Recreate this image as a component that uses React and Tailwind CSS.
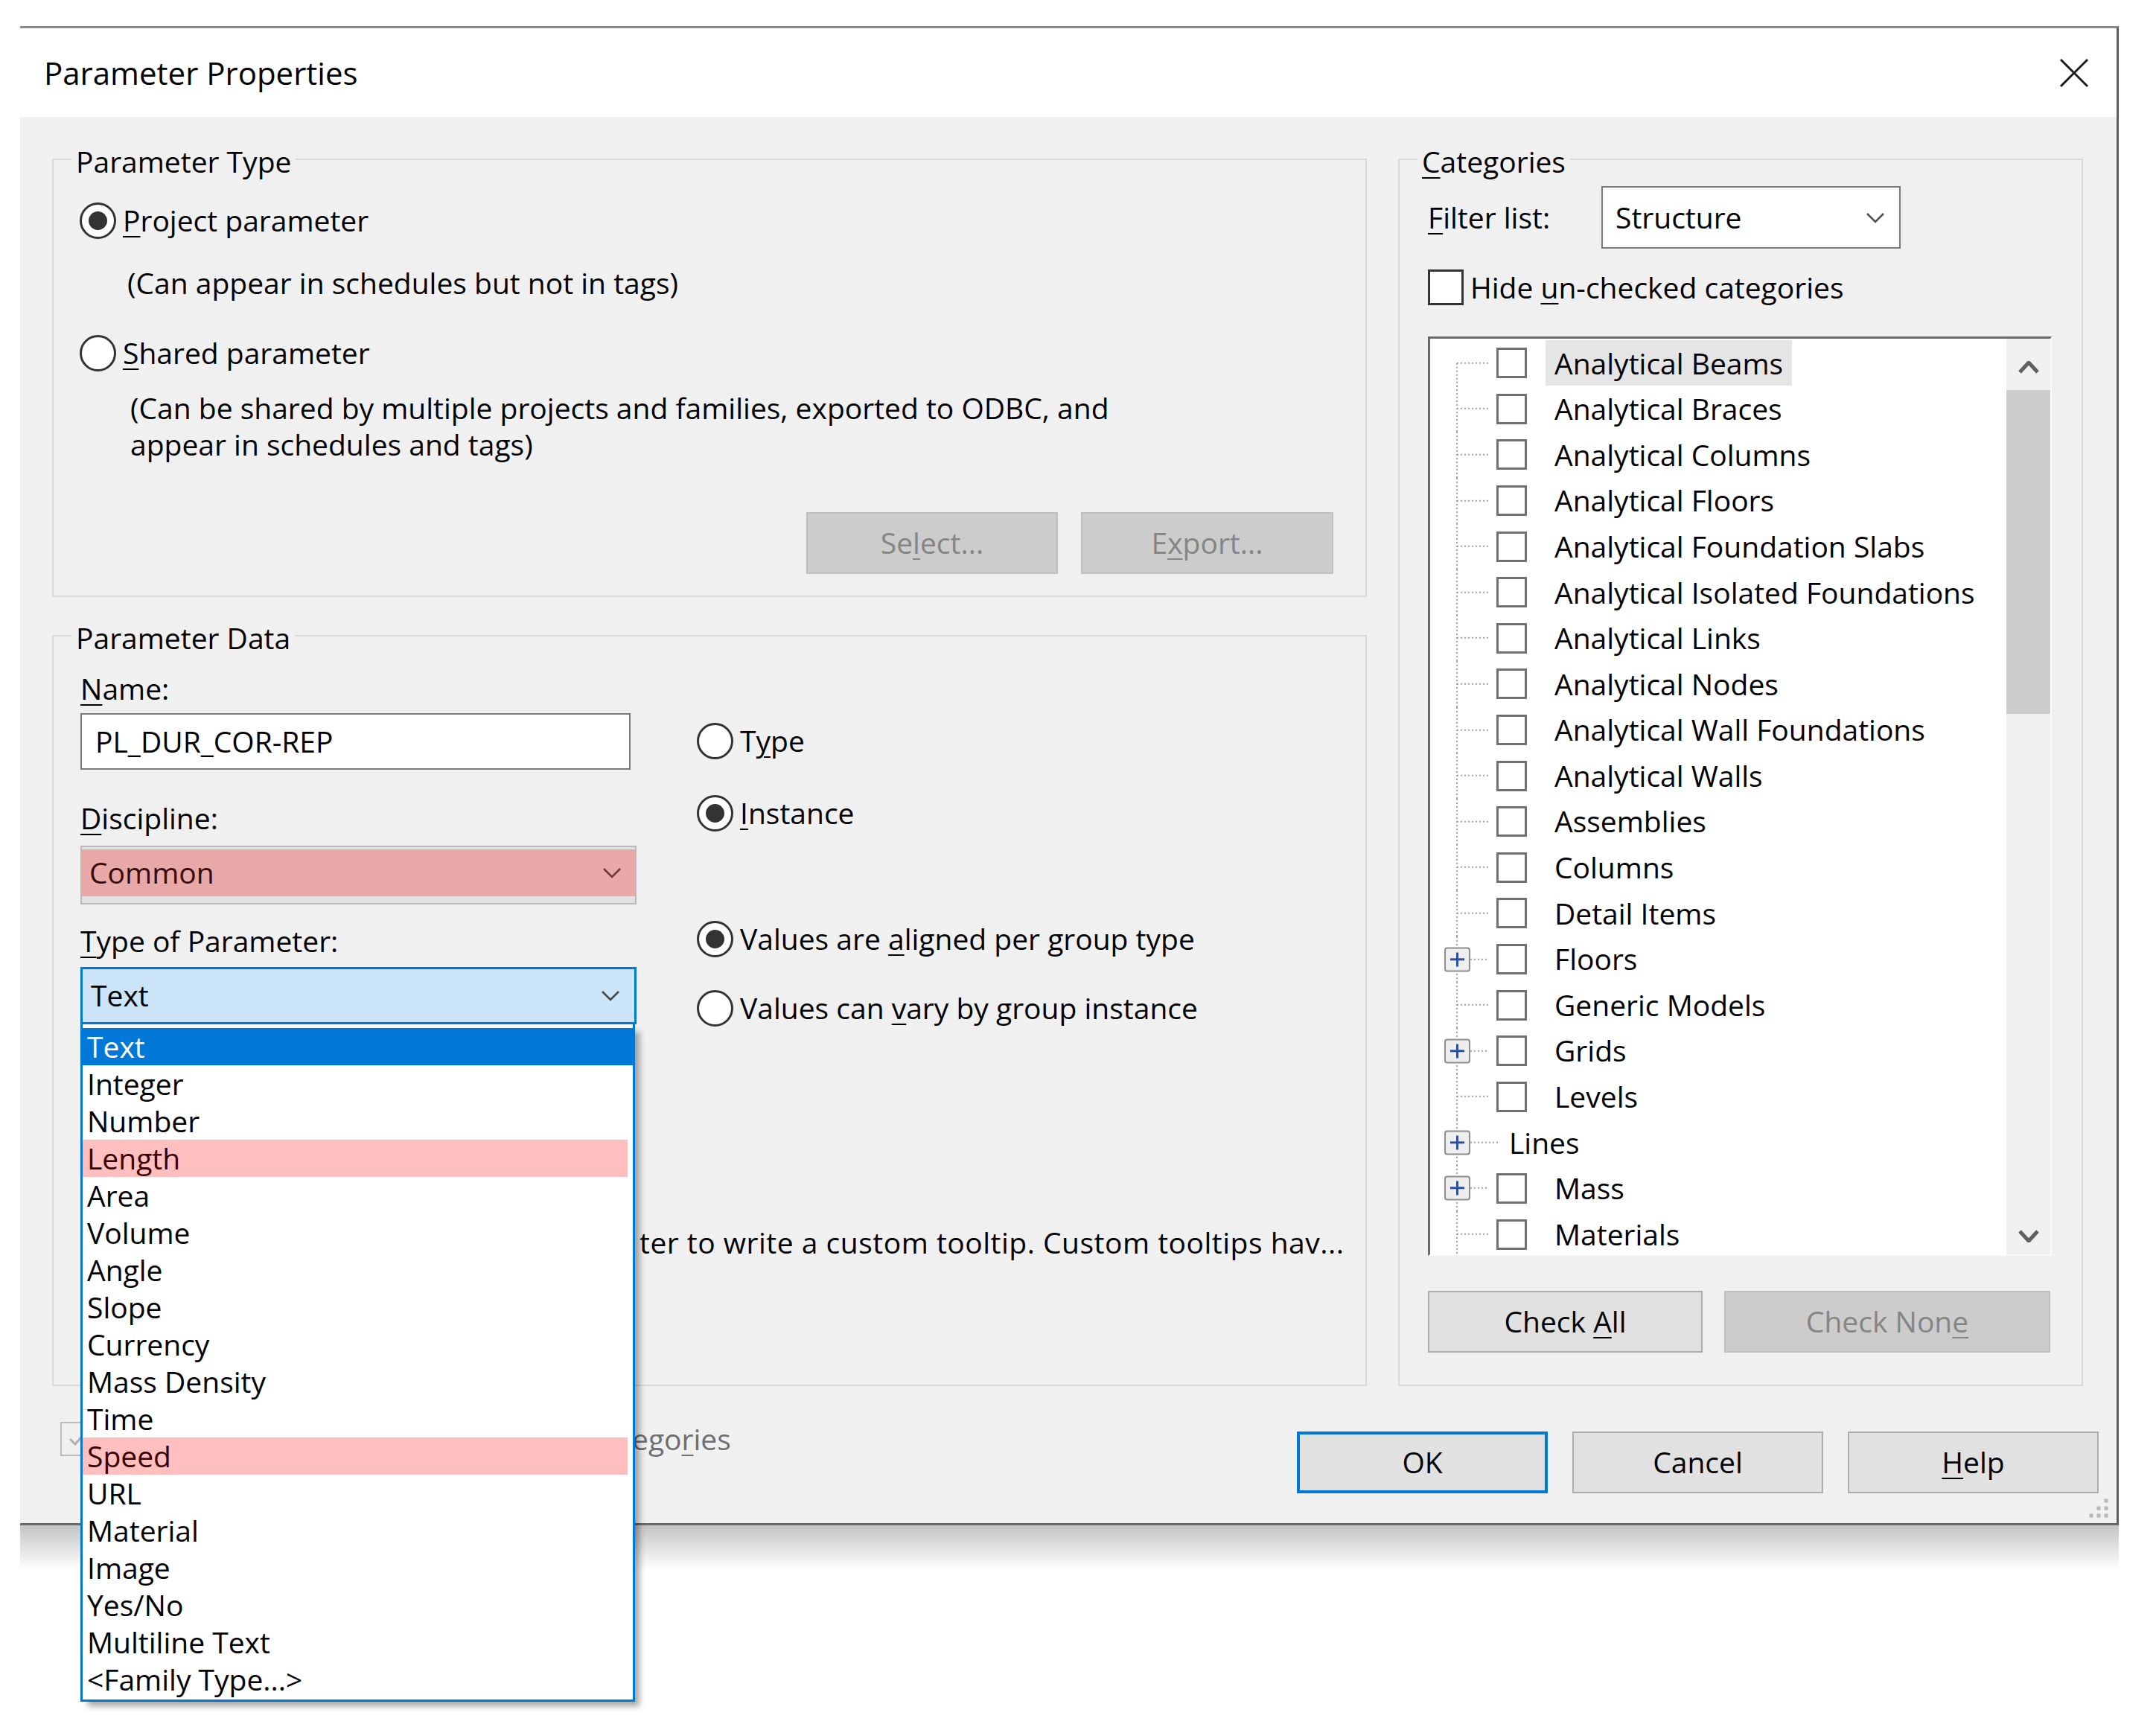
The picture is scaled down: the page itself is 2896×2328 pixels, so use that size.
import React from "react";

const U = ({ children }) => (
  <span className="underline decoration-[2px] underline-offset-[6px]">{children}</span>
);

function Chevron({ color = "#505050", down = true, w = 26, h = 15, sw = 2.5 }) {
  return (
    <svg width={w} height={h} viewBox={`0 0 ${w} ${h}`} className="shrink-0">
      {down ? (
        <polyline points={`2,2 ${w / 2},${h - 2} ${w - 2},2`} fill="none" stroke={color} strokeWidth={sw} />
      ) : (
        <polyline points={`2,${h - 2} ${w / 2},2 ${w - 2},${h - 2}`} fill="none" stroke={color} strokeWidth={sw} />
      )}
    </svg>
  );
}

function Radio({ checked }) {
  return (
    <div className="w-[49px] h-[49px] rounded-full border-[3px] border-[#333333] bg-white flex items-center justify-center shrink-0">
      {checked && <div className="w-[25px] h-[25px] rounded-full bg-[#333333]" />}
    </div>
  );
}

function RadioRow({ checked, children, className = "" }) {
  return (
    <div className={"flex items-center gap-[9px] h-[50px] " + className}>
      <Radio checked={checked} />
      <span className="leading-[50px] whitespace-nowrap">{children}</span>
    </div>
  );
}

function Group({ title, className = "", children }) {
  return (
    <div className={"relative border-2 border-[#d9d9d9] " + className}>
      <div className="absolute left-[24px] top-[-23px] px-[6px] bg-[#f0f0f0] h-[50px] leading-[50px] whitespace-nowrap">
        {title}
      </div>
      {children}
    </div>
  );
}

function DisabledButton({ className = "", children }) {
  return (
    <div className={"h-[83px] bg-[#cccccc] border-2 border-[#bfbfbf] flex items-center justify-center text-[#858585] " + className}>
      <span className="whitespace-pre">{children}</span>
    </div>
  );
}

function Button({ className = "", children }) {
  return (
    <div className={"h-[83px] bg-[#e1e1e1] border-2 border-[#adadad] flex items-center justify-center " + className}>
      <span className="whitespace-pre">{children}</span>
    </div>
  );
}

const types = [
  "Text", "Integer", "Number", "Length", "Area", "Volume", "Angle", "Slope", "Currency",
  "Mass Density", "Time", "Speed", "URL", "Material", "Image", "Yes/No", "Multiline Text", "<Family Type...>",
];

const cats = [
  { n: "Analytical Beams", hl: true },
  { n: "Analytical Braces" },
  { n: "Analytical Columns" },
  { n: "Analytical Floors" },
  { n: "Analytical Foundation Slabs" },
  { n: "Analytical Isolated Foundations" },
  { n: "Analytical Links" },
  { n: "Analytical Nodes" },
  { n: "Analytical Wall Foundations" },
  { n: "Analytical Walls" },
  { n: "Assemblies" },
  { n: "Columns" },
  { n: "Detail Items" },
  { n: "Floors", plus: true },
  { n: "Generic Models" },
  { n: "Grids", plus: true },
  { n: "Levels" },
  { n: "Lines", plus: true, nocheck: true },
  { n: "Mass", plus: true },
  { n: "Materials" },
];

function TreeLines({ first, plus, wide }) {
  const w = wide ? 94 : 89;
  const cy = 30.8;
  const end = wide ? 92 : 78;
  const dot = { stroke: "#a3a3a3", strokeWidth: 2, strokeDasharray: "2 3" };
  return (
    <svg width={w} height="62" viewBox={`0 0 ${w} 62`} className="shrink-0">
      <line x1="36" y1={first ? cy : 0} x2="36" y2="62" {...dot} />
      <line x1={plus ? 54 : 36} y1={cy} x2={end} y2={cy} {...dot} />
      {plus && (
        <g>
          <rect x="20" y="15.5" width="33" height="31" rx="3" fill="#eeeeee" stroke="#8e8e8e" strokeWidth="2" />
          <line x1="27" y1={cy} x2="46" y2={cy} stroke="#2d4f9e" strokeWidth="3" />
          <line x1="36.5" y1="21.5" x2="36.5" y2="40.5" stroke="#2d4f9e" strokeWidth="3" />
        </g>
      )}
    </svg>
  );
}

export default function App() {
  return (
    <div className="w-[2896px] h-[2328px] bg-white overflow-hidden relative text-[39px] text-black font-['Open_Sans',sans-serif]">
      <div className="pt-[35px] pl-[27px]">
        {/* Dialog */}
        <div className="relative w-[2819px] h-[2014px] flex flex-col border-t-[3px] border-r-[3px] border-b-[3px] border-t-[#8a8a8a] border-r-[#5e5e5e] border-b-[#6a6a6a] bg-[#f0f0f0]">
          {/* Title bar */}
          <div className="h-[119px] bg-white flex items-center justify-between pl-[32px] pr-[37px]">
            <span className="text-[42px] leading-[50px]">Parameter Properties</span>
            <svg width="40" height="40" viewBox="0 0 40 40">
              <line x1="2" y1="2" x2="38" y2="38" stroke="#1a1a1a" strokeWidth="3" />
              <line x1="38" y1="2" x2="2" y2="38" stroke="#1a1a1a" strokeWidth="3" />
            </svg>
          </div>

          {/* Body */}
          <div className="flex-1 flex flex-col pl-[43px]">
            <div className="flex gap-[42px] pt-[56px] pr-[45px]">
              {/* Left column */}
              <div className="w-[1766px] flex flex-col gap-[51px]">
                <Group title="Parameter Type" className="h-[589px]">
                  <div className="flex flex-col pl-[35px] pt-[56px]">
                    <RadioRow checked>
                      <U>P</U>roject parameter
                    </RadioRow>
                    <div className="mt-[34px] ml-[64px] h-[50px] leading-[50px] whitespace-nowrap">
                      (Can appear in schedules but not in tags)
                    </div>
                    <RadioRow className="mt-[44px]">
                      <U>S</U>hared parameter
                    </RadioRow>
                    <div className="mt-[24px] ml-[68px] leading-[49px] whitespace-nowrap">
                      (Can be shared by multiple projects and families, exported to ODBC, and
                      <br />
                      appear in schedules and tags)
                    </div>
                    <div className="mt-[67px] flex justify-end gap-[31px] pr-[43px]">
                      <DisabledButton className="w-[338px]">
                        Se<U>l</U>ect...
                      </DisabledButton>
                      <DisabledButton className="w-[339px]">
                        E<U>x</U>port...
                      </DisabledButton>
                    </div>
                  </div>
                </Group>

                <Group title="Parameter Data" className="h-[1009px]">
                  <div className="flex pl-[36px]">
                    <div className="w-[747px] flex flex-col">
                      <div className="mt-[45px] h-[50px] leading-[50px]">
                        <U>N</U>ame:
                      </div>
                      <div className="mt-[8px] w-[739px] h-[76px] border-2 border-[#7a7a7a] bg-white flex items-center pl-[18px] whitespace-nowrap">
                        PL_DUR_COR-REP
                      </div>
                      <div className="mt-[40px] h-[50px] leading-[50px]">
                        <U>D</U>iscipline:
                      </div>
                      <div className="mt-[12px] w-[747px] h-[79px] border-2 border-[#b9b9b9] bg-[#e1e1e1] pt-[3px]">
                        <div className="h-[63px] bg-[#e8a8a8] flex items-center justify-between pl-[10px] pr-[18px] text-[#3b0a0a]">
                          <span>Common</span>
                          <Chevron color="#6a3a3a" />
                        </div>
                      </div>
                      <div className="mt-[24px] h-[50px] leading-[50px]">
                        <U>T</U>ype of Parameter:
                      </div>
                      <div className="relative mt-[10px] w-[747px] h-[77px]">
                        <div className="w-full h-full border-[3px] border-[#0078d7] bg-[#cce4f7] flex items-center justify-between pl-[11px] pr-[19px]">
                          <span>Text</span>
                          <Chevron color="#444444" />
                        </div>
                        {/* Dropdown list */}
                        <div className="absolute left-0 top-full z-20 w-[745px] bg-white border-x-[3px] border-b-[3px] border-[#0078d7] pt-[5px] pb-[2px] shadow-[8px_8px_8px_-2px_rgba(0,0,0,0.35)]">
                          {types.map((t) => {
                            const sel = t === "Text";
                            const pink = t === "Length" || t === "Speed";
                            return (
                              <div
                                key={t}
                                className={
                                  "h-[50px] leading-[50px] pl-[6px] whitespace-nowrap " +
                                  (sel ? "bg-[#0078d7] text-white" : pink ? "bg-[#ffbfbf] text-[#3a0000] mr-[7px]" : "")
                                }
                              >
                                {t}
                              </div>
                            );
                          })}
                        </div>
                      </div>
                    </div>
                    <div className="ml-[81px] flex flex-col">
                      <RadioRow className="mt-[115px]">
                        T<U>y</U>pe
                      </RadioRow>
                      <RadioRow checked className="mt-[47px]">
                        <U>I</U>nstance
                      </RadioRow>
                      <RadioRow checked className="mt-[119px]">
                        Values are <U>a</U>ligned per group type
                      </RadioRow>
                      <RadioRow className="mt-[43px]">
                        Values can <U>v</U>ary by group instance
                      </RadioRow>
                    </div>
                  </div>
                  <div className="mt-[265px] pl-[787px] h-[50px] leading-[50px] whitespace-nowrap tracking-[0.5px]">
                    ter to write a custom tooltip. Custom tooltips hav...
                  </div>
                </Group>
              </div>

              {/* Right column */}
              <Group
                title={
                  <>
                    <U>C</U>ategories
                  </>
                }
                className="w-[920px] h-[1649px]"
              >
                <div className="flex flex-col pl-[38px] pr-[39px] pt-[35px]">
                  <div className="flex items-center h-[84px]">
                    <span className="w-[233px] whitespace-nowrap">
                      <U>F</U>ilter list:
                    </span>
                    <div className="w-[402px] h-[84px] border-2 border-[#7a7a7a] bg-white flex items-center justify-between pl-[17px] pr-[19px]">
                      <span>Structure</span>
                      <Chevron color="#505050" />
                    </div>
                  </div>
                  <div className="mt-[28px] flex items-center gap-[9px] h-[48px]">
                    <div className="w-[48px] h-[48px] border-[3px] border-[#333333] bg-white shrink-0" />
                    <span className="whitespace-nowrap">
                      Hide <U>u</U>n-checked categories
                    </span>
                  </div>

                  {/* Tree list */}
                  <div className="mt-[42px] w-[838px] h-[1235px] flex border-t-[3px] border-l-[3px] border-r-2 border-b-2 border-t-[#6a6a6a] border-l-[#6a6a6a] border-r-[#fbfbfb] border-b-[#fbfbfb] bg-white">
                    <div className="w-[774px] h-full overflow-hidden pt-[2px]">
                      {cats.map((c, i) => (
                        <div key={c.n} className="flex items-center h-[61.6px]">
                          <TreeLines first={i === 0} plus={c.plus} wide={c.nocheck} />
                          {!c.nocheck && (
                            <div className="w-[41px] h-[41px] border-[3px] border-[#707070] bg-white shrink-0" />
                          )}
                          <div
                            className={
                              "h-[61px] flex items-center px-[12px] whitespace-nowrap " +
                              (c.nocheck ? "" : "ml-[25px] ") +
                              (c.hl ? "bg-[#e5e5e5]" : "")
                            }
                          >
                            {c.n}
                          </div>
                        </div>
                      ))}
                    </div>
                    <div className="w-[59px] h-full bg-[#f0f0f0] flex flex-col">
                      <div className="h-[69px] flex justify-center pt-[30px]">
                        <Chevron down={false} color="#606060" w={28} h={17} sw={5} />
                      </div>
                      <div className="h-[435px] bg-[#cdcdcd]" />
                      <div className="flex-1" />
                      <div className="h-[50px] flex items-center justify-center">
                        <Chevron color="#606060" w={28} h={17} sw={5} />
                      </div>
                    </div>
                  </div>

                  <div className="mt-[47px] flex gap-[29px]">
                    <Button className="w-[369px]">
                      Check <U>A</U>ll
                    </Button>
                    <DisabledButton className="w-[438px]">
                      Check Non<U>e</U>
                    </DisabledButton>
                  </div>
                </div>
              </Group>
            </div>

            {/* Bottom row */}
            <div className="flex justify-between items-start pr-[24px]">
              <div className="ml-[11px] mt-[46px] flex items-center">
                <div className="w-[46px] h-[46px] border-2 border-[#bcbcbc] bg-[#f0f0f0] flex items-center justify-center shrink-0">
                  <svg width="30" height="30" viewBox="0 0 30 30">
                    <polyline points="5,15 12,22 25,7" fill="none" stroke="#b0b0b0" strokeWidth="3" />
                  </svg>
                </div>
                <div className="ml-[722px] h-[50px] leading-[50px] whitespace-nowrap text-[#6f6f6f]">
                  ego<U>r</U>ies
                </div>
              </div>
              <div className="mt-[61px] flex gap-[33px]">
                <div className="w-[337px] h-[83px] bg-[#e1e1e1] border-[4px] border-[#0078d7] flex items-center justify-center">
                  OK
                </div>
                <Button className="w-[337px]">Cancel</Button>
                <Button className="w-[337px]">
                  <U>H</U>elp
                </Button>
              </div>
            </div>
          </div>

          {/* Resize grip */}
          <svg width="32" height="32" viewBox="0 0 32 32" className="absolute right-[8px] bottom-[4px]">
            {[
              [26, 6], [26, 16], [16, 16], [26, 26], [16, 26], [6, 26],
            ].map(([x, y], i) => (
              <rect key={i} x={x - 2.5} y={y - 2.5} width="5" height="5" fill="#b8b8b8" />
            ))}
          </svg>
        </div>
        {/* Shadow under dialog */}
        <div className="w-[2819px] h-[60px] bg-linear-to-b from-[#c4c4c4] to-white" />
      </div>
    </div>
  );
}
